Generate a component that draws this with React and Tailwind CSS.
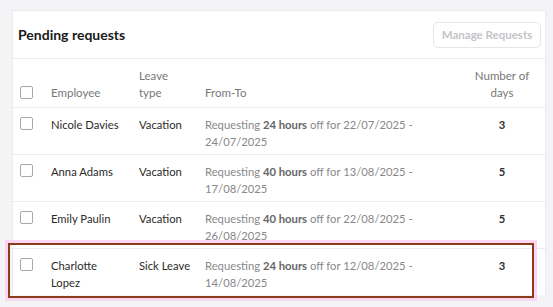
import React from 'react';

const rows = [
  { name: 'Nicole Davies', type: 'Vacation', hours: 24, from: '22/07/2025', to: '24/07/2025', days: 3 },
  { name: 'Anna Adams', type: 'Vacation', hours: 40, from: '13/08/2025', to: '17/08/2025', days: 5 },
  { name: 'Emily Paulin', type: 'Vacation', hours: 40, from: '22/08/2025', to: '26/08/2025', days: 5 },
  { name: 'Charlotte Lopez', type: 'Sick Leave', hours: 24, from: '12/08/2025', to: '14/08/2025', days: 3 },
];

const cols = 'grid grid-cols-[31px_88px_66px_259px_76px] px-[7px]';

function Checkbox() {
  return <span className="block w-[13px] h-[13px] border border-[#a8a8a8] rounded-[2px] bg-white" />;
}

export default function App() {
  return (
    <div className="relative w-[553px] h-[307px] bg-[#f4f4f6] pt-[10px] pl-[12px] overflow-hidden" style={{ fontFamily: 'Lato, "Open Sans", sans-serif' }}>
      <div className="w-[534px] bg-white border border-[#ececec] border-b-0">
        <div className="flex items-center justify-between h-[48px] pl-[5px] pr-[4px] border-b border-[#ececec]">
          <h2 className="text-[14px] font-bold text-[#1a1a1a]">Pending requests</h2>
          <button className="h-[26px] w-[108px] rounded-[5px] border border-[#e6e6e6] text-[11.5px] font-bold text-[#c4c4c8]">
            Manage Requests
          </button>
        </div>

        <div className={`${cols} items-end pt-[8px] pb-[6px] text-[11.5px] leading-[17px] text-[#777] border-b border-[#ececec]`}>
          <div className="pb-[2px]"><Checkbox /></div>
          <div>Employee</div>
          <div>Leave<br />type</div>
          <div>From-To</div>
          <div className="text-center">Number of<br />days</div>
        </div>

        {rows.map((r, i) => (
          <div key={r.name} className={`${cols} pt-[8px] pb-[4px] text-[11.25px] leading-[17px] ${i < rows.length - 1 ? 'border-b border-[#ececec]' : ''}`}>
            <div className="pt-[1px]"><Checkbox /></div>
            <div className="text-[#2a2a2a] pr-[16px]">{r.name}</div>
            <div className="text-[#2a2a2a]">{r.type}</div>
            <div className="text-[#888] pr-[30px]">
              Requesting <span className="font-bold text-[#666]">{r.hours} hours</span> off for {r.from} - {r.to}
            </div>
            <div className="text-center font-bold text-[#333]">{r.days}</div>
          </div>
        ))}
      </div>

      <div className="absolute left-[8px] top-[243px] w-[526px] h-[55px] border-2 border-[#8a3b1c] shadow-[0_0_0_3px_#fbd6f1] pointer-events-none" />
    </div>
  );
}
